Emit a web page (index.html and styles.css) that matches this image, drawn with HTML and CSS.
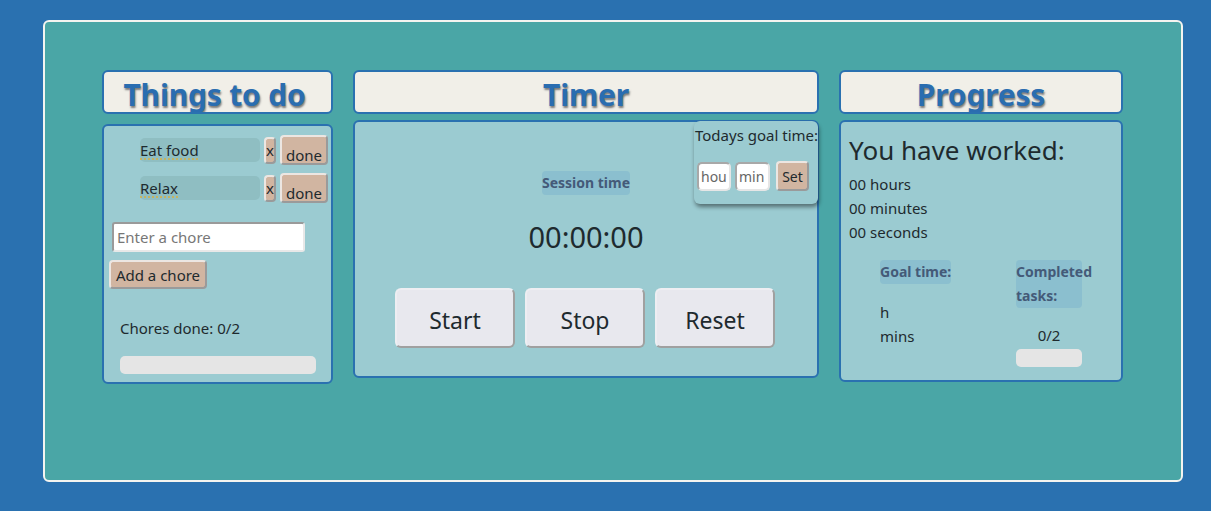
FILE: index.html
```html
<!DOCTYPE html>
<html>
<head>
<meta charset="utf-8">
<link rel="stylesheet" href="styles.css">
</head>
<body>
<div class="app">
  <div class="col col-todo">
    <h2 class="head">Things to do</h2>
    <div class="panel todo-panel">
      <div class="chore">
        <span class="chore-name"><span class="ul">Eat food</span></span>
        <button class="btn-x">x</button>
        <button class="btn-done">done</button>
      </div>
      <div class="chore">
        <span class="chore-name"><span class="ul">Relax</span></span>
        <button class="btn-x">x</button>
        <button class="btn-done">done</button>
      </div>
      <input class="chore-input" type="text" placeholder="Enter a chore">
      <button class="btn-add">Add a chore</button>
      <p class="chores-done">Chores done: 0/2</p>
      <div class="bar"></div>
    </div>
  </div>

  <div class="col col-timer">
    <h2 class="head">Timer</h2>
    <div class="panel timer-panel">
      <div class="goal-box">
        <div class="goal-title">Todays goal time:</div>
        <div class="goal-row">
          <input class="goal-in in-h" type="text" placeholder="hou">
          <input class="goal-in in-m" type="text" placeholder="min">
          <button class="btn-set">Set</button>
        </div>
      </div>
      <div class="session"><span class="label">Session time</span></div>
      <div class="clock">00:00:00</div>
      <div class="controls">
        <button class="big">Start</button>
        <button class="big">Stop</button>
        <button class="big">Reset</button>
      </div>
    </div>
  </div>

  <div class="col col-prog">
    <h2 class="head">Progress</h2>
    <div class="panel prog-panel">
      <div class="worked">You have worked:</div>
      <div class="line">00 hours</div>
      <div class="line">00 minutes</div>
      <div class="line">00 seconds</div>
      <div class="stats">
        <div class="stat stat-goal">
          <span class="label">Goal time:</span>
          <div class="stat-vals">
            <div class="line">h</div>
            <div class="line">mins</div>
          </div>
        </div>
        <div class="stat stat-tasks">
          <span class="label label-tasks">Completed tasks:</span>
          <div class="count">0/2</div>
          <div class="bar bar-small"></div>
        </div>
      </div>
    </div>
  </div>
</div>
</body>
</html>
```
FILE: styles.css
```css
* { box-sizing: border-box; }
html, body { margin: 0; padding: 0; }
body {
  background: #2a71b0;
  font-family: "Noto Sans", "Open Sans", sans-serif;
  color: #1e2a2e;
  padding: 20px 28px 29px 43px;
  height: 511px;
}
.app {
  height: 462px;
  width: 1140px;
  background: #4aa6a6;
  border: 2px solid #f4f4f0;
  border-radius: 6px;
  display: flex;
  align-items: flex-start;
  gap: 20px;
  padding: 48px 0 0 57px;
}
.col { display: flex; flex-direction: column; flex: none; min-width: 0; }
.col-todo { width: 231px; gap: 10px; }
.col-timer { width: 466px; gap: 6px; }
.col-prog { width: 284px; gap: 6px; }
.head {
  margin: 0;
  height: 44px;
  background: #f1efe8;
  border: 2px solid #2a71b0;
  border-radius: 6px;
  text-align: center;
  font-size: 30px;
  line-height: 46px;
  font-weight: 700;
  color: #2a6db0;
  text-shadow: 1px 2px 2px #7a7a7a;
  letter-spacing: -0.2px;
  overflow: hidden;
}
.col-todo .head { padding-right: 6px; }
.panel {
  background: #9bcbd1;
  border: 2px solid #2a71b0;
  border-radius: 6px;
  position: relative;
}
.todo-panel { height: 260px; padding: 8px 4px 0 5px; display: flex; flex-direction: column; align-items: flex-start; }
.chore { display: flex; align-items: center; gap: 4px; margin-left: 31px; height: 32px; margin-bottom: 6px; }
.chore-name {
  width: 120px;
  height: 24px;
  background: #8fbec2;
  border-radius: 5px;
  font-size: 15px;
  line-height: 24px;
}
.ul { text-decoration: underline dotted #d8b040; text-underline-offset: 3px; }
button {
  font-family: inherit;
  background: #d1b5a1;
  color: #1e2a2e;
  border: 2px solid;
  border-color: #ece6e2 #9a9a9a #9a9a9a #ece6e2;
  border-radius: 4px;
  padding: 0;
  cursor: pointer;
}
.btn-x { width: 12px; height: 27px; font-size: 15px; line-height: 20px; }
.btn-done { width: 48px; height: 30px; font-size: 15px; line-height: 30px; padding-top: 3px; }
.chore-input {
  margin: 12px 0 0 3px;
  width: 193px;
  height: 30px;
  border: 2px solid #9a9a9a;
  border-color: #9a9a9a #e8e8e8 #e8e8e8 #9a9a9a;
  border-radius: 3px;
  font-family: inherit;
  font-size: 15px;
  padding: 0 3px;
  background: #fff;
}
.chore-input::placeholder { color: #777; }
.btn-add { margin-top: 8px; height: 29px; width: 98px; font-size: 15px; }
.chores-done { margin: 29px 0 0 11px; font-size: 15px; }
.bar { background: #e5e5e5; border-radius: 5px; height: 18px; width: 196px; margin: 18px 0 0 11px; }

.timer-panel { height: 258px; display: flex; flex-direction: column; align-items: center; }
.goal-box {
  position: absolute;
  top: -1px;
  right: -1px;
  width: 124px;
  height: 83px;
  background: #9bcbd1;
  border-radius: 6px;
  box-shadow: 1px 3px 4px rgba(0,0,0,0.45);
  padding: 2px 0 0 1px;
  overflow: hidden;
}
.goal-title { font-size: 15px; white-space: nowrap; line-height: 24px; }
.goal-row { display: flex; gap: 4px; margin-top: 14px; padding-left: 2px; align-items: center; }
.goal-in {
  height: 29px;
  border: 2px solid #9a9a9a;
  border-color: #a8a8a8 #e6e6e6 #e6e6e6 #a8a8a8;
  border-radius: 5px;
  background: #fff;
  font-family: inherit;
  font-size: 14px;
  padding: 0 2px;
}
.goal-in::placeholder { color: #666; }
.in-h { width: 34px; }
.in-m { width: 35px; }
.btn-set { width: 33px; height: 30px; font-size: 14px; margin-left: 2px; }
.session { margin-top: 49px; }
.label {
  display: inline-block;
  background: #8bbfcf;
  color: #445a78;
  font-weight: 700;
  font-size: 14px;
  line-height: 24px;
  border-radius: 4px;
}
.clock { font-size: 29px; margin-top: 22px; line-height: 40px; }
.controls { display: flex; gap: 10px; margin-top: 31px; margin-left: -2px; }
.big {
  width: 120px;
  height: 60px;
  font-size: 23px;
  background: #e8e8ee;
  border-color: #eeeef2 #a0a0a0 #a0a0a0 #eeeef2;
  border-radius: 6px;
  padding-top: 4px;
}

.prog-panel { height: 262px; padding: 8px 8px 0 8px; }
.worked { font-size: 26px; line-height: 40px; margin-bottom: 2px; }
.line { font-size: 15px; line-height: 24px; }
.stats { display: flex; margin-top: 16px; padding-left: 31px; }
.stat-goal { width: 136px; }
.stat-vals { margin-top: 16px; }
.stat-tasks { width: 66px; display: flex; flex-direction: column; align-items: center; }
.label-tasks { width: 66px; }
.count { font-size: 15px; line-height: 24px; margin-top: 15px; }
.bar-small { width: 66px; margin: 2px 0 0 0; height: 18px; }
```
